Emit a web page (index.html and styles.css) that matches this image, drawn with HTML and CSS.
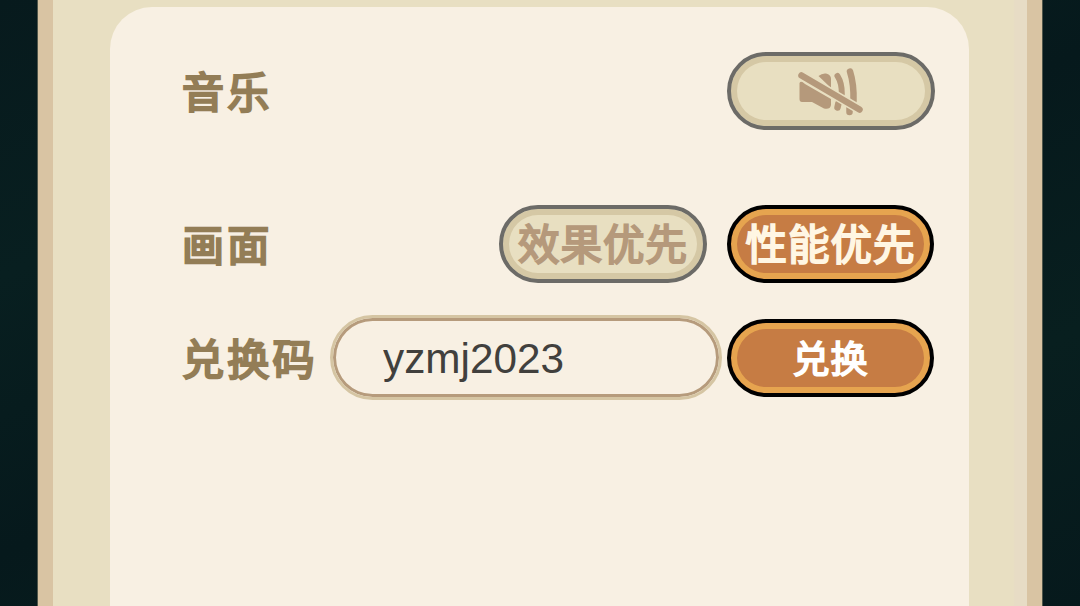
FILE: index.html
```html
<!DOCTYPE html>
<html lang="zh-CN">
<head>
<meta charset="UTF-8">
<meta name="viewport" content="width=device-width, initial-scale=1.0">
<title>设置</title>
<link rel="stylesheet" href="styles.css">
</head>
<body>

<div class="frame">
<div class="panel">
  <div class="row music">
    <span class="label">音乐</span>
    <button class="btn off mute" aria-label="音乐">
      <svg width="66" height="50" viewBox="0 0 66 50" fill="none" stroke="#b5997b" stroke-linecap="round">
        <path d="M1.500 17Q3 14 7 18L33 33V39Q32 44 26 42.500L14 36H4Q1.500 36 1.500 33Z" fill="#b5997b" stroke="none"/>
        <path d="M20.500 10Q24 7 28 7.500Q33 8.500 33 13V22Z" fill="#b5997b" stroke="none"/>
        <path d="M39.500 10Q44 17 43.800 28" stroke-width="6"/>
        <path d="M52 5.500Q56 18 55.500 35" stroke-width="6.500"/>
        <path d="M40.500 37L39.500 41.500" stroke-width="6.500"/>
        <path d="M51.500 42V46" stroke-width="6.500"/>
        <path d="M0 7.500L66 46" stroke="#e8dfc1" stroke-width="9.500" stroke-linecap="butt"/>
        <path d="M3.500 9.500L61.500 43.500" stroke-width="6.500"/>
      </svg>
    </button>
  </div>
  <div class="row graphics">
    <span class="label">画面</span>
    <button class="btn off">效果优先</button>
    <button class="btn on">性能优先</button>
  </div>
  <div class="row redeem">
    <span class="label">兑换码</span>
    <input class="code" type="text" value="yzmj2023">
    <button class="btn on small">兑换</button>
  </div>
</div>
</div>

</body>
</html>
```

FILE: styles.css
```css
* { box-sizing: border-box; }
html, body { height: 100%; margin: 0; padding: 0; overflow: hidden; }
body { background: linear-gradient(155deg, #071a1d 0%, #081f20 25%, #06191c 50%, #081f1f 75%, #06191c 100%); font-family: "Noto Sans CJK SC", sans-serif; }
.frame { width: 1004px; height: 100%; margin: 0 auto; padding: 7px 58px 0 57px; border: solid #d9c4a3; border-width: 0 15px; background: linear-gradient(90deg, #e8dfc2 0 960px, #e7dcc5 962px); box-shadow: 0 0 0 1px #50564a; }
.panel { height: 100%; padding: 45px 34px 0 72px; border-radius: 42px 42px 0 0; background: #f8f0e3; }
.row { display: flex; align-items: center; height: 78px; }
.label { margin-right: auto; padding-bottom: 3px; color: #937d56; font-size: 42px; line-height: 74px; letter-spacing: 3.3px; font-weight: 400; -webkit-text-stroke: 2.4px #937d56; white-space: nowrap; }
.graphics { margin-top: 75px; }
.graphics .off { margin-right: 20px; }
.redeem { height: 86px; margin-top: 32px; }
.btn { display: flex; justify-content: center; align-items: center; flex: none; width: 208px; height: 78px; padding: 0 0 4px; border: 4px solid; border-radius: 39px; font-family: inherit; font-size: 41.5px; letter-spacing: 1px; line-height: 60px; font-weight: 400; white-space: nowrap; cursor: pointer; }
.off { border-color: #6c6b67; background: #e8dfc1; box-shadow: inset 0 0 0 6px #d5c8a5; color: #b5997b; -webkit-text-stroke: 2.1px #b5997b; }
.on { width: 207px; margin-right: 1px; border-color: #000; background: #c67c44; box-shadow: inset 0 0 0 6px #e6a44f; color: #fff6e3; -webkit-text-stroke: 2px #fff6e3; }
.small { padding-bottom: 3px; color: #fff; font-size: 37px; -webkit-text-stroke: 1.8px #fff; }
.mute { padding: 0 1px 0 0; }
.code { width: 392px; height: 85px; margin: 0 5px 1px 0; padding: 3px 50px 0; border: 3px solid #d5c5a3; border-radius: 43px; outline: none; background: #f8f0e3; box-shadow: inset 0 0 0 3px #b69b7c; color: #41403d; font: 42.3px "Liberation Sans", sans-serif; }
```
